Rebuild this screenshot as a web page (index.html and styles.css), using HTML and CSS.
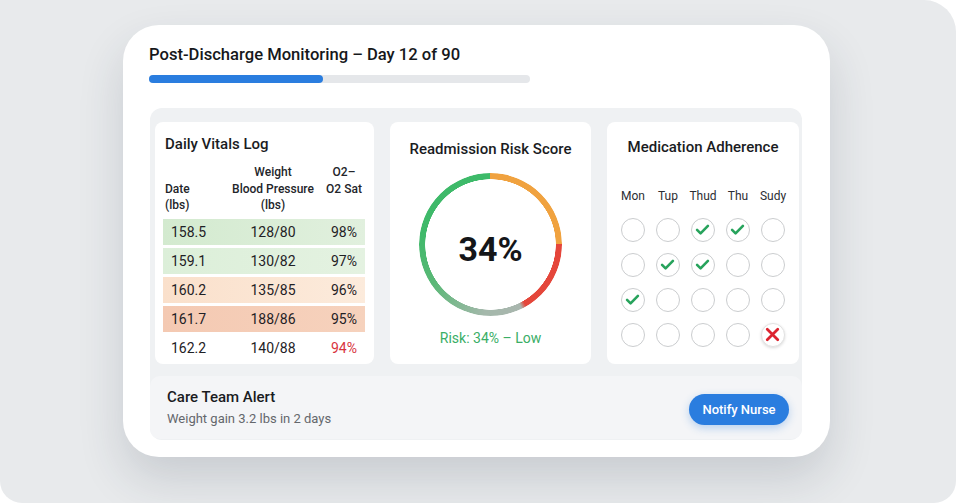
FILE: index.html
```html
<!DOCTYPE html>
<html lang="en">

<head>
    <meta charset="UTF-8">
    <meta name="viewport" content="width=device-width, initial-scale=1.0">
    <title>Post-Discharge Monitoring</title>
    <link rel="stylesheet" href="styles.css">
</head>

<body>
<div class="frame">
    <div class="card">
        <div class="page-title">Post-Discharge Monitoring – Day 12 of 90</div>
        <div class="progress">
            <div class="progress-fill" style="width: 45.7%"></div>
        </div>

        <div class="panel">
            <div class="tiles">
                <div class="tile vitals">
                    <div class="tile-title">Daily Vitals Log</div>
                    <div class="vitals-head">
                        <span class="col-date">Date<br>(lbs)</span>
                        <span class="col-bp">Weight<br>Blood Pressure<br>(lbs)</span>
                        <span class="col-sat">O2–<br>O2 Sat</span>
                    </div>
                    <div class="vitals-row good">
                        <span>158.5</span><span>128/80</span><span>98%</span>
                    </div>
                    <div class="vitals-row ok">
                        <span>159.1</span><span>130/82</span><span>97%</span>
                    </div>
                    <div class="vitals-row warn">
                        <span>160.2</span><span>135/85</span><span>96%</span>
                    </div>
                    <div class="vitals-row alert">
                        <span>161.7</span><span>188/86</span><span>95%</span>
                    </div>
                    <div class="vitals-row">
                        <span>162.2</span><span>140/88</span><span class="low">94%</span>
                    </div>
                </div>

                <div class="tile risk">
                    <div class="tile-title">Readmission Risk Score</div>
                    <div class="gauge">
                        <span class="gauge-value">34%</span>
                    </div>
                    <div class="risk-label">Risk: 34% – Low</div>
                </div>

                <div class="tile meds">
                    <div class="tile-title">Medication Adherence</div>
                    <div class="dose-grid">
                        <span class="day">Mon</span>
                        <span class="day">Tup</span>
                        <span class="day">Thud</span>
                        <span class="day">Thu</span>
                        <span class="day">Sudy</span>

                        <span class="dose"></span>
                        <span class="dose"></span>
                        <span class="dose taken"><svg viewBox="0 0 24 24"><path d="M5.8 12.4l4 4 8.4-8.6"/></svg></span>
                        <span class="dose taken"><svg viewBox="0 0 24 24"><path d="M5.8 12.4l4 4 8.4-8.6"/></svg></span>
                        <span class="dose"></span>

                        <span class="dose"></span>
                        <span class="dose taken"><svg viewBox="0 0 24 24"><path d="M5.8 12.4l4 4 8.4-8.6"/></svg></span>
                        <span class="dose taken"><svg viewBox="0 0 24 24"><path d="M5.8 12.4l4 4 8.4-8.6"/></svg></span>
                        <span class="dose"></span>
                        <span class="dose"></span>

                        <span class="dose taken"><svg viewBox="0 0 24 24"><path d="M5.8 12.4l4 4 8.4-8.6"/></svg></span>
                        <span class="dose"></span>
                        <span class="dose"></span>
                        <span class="dose"></span>
                        <span class="dose"></span>

                        <span class="dose"></span>
                        <span class="dose"></span>
                        <span class="dose"></span>
                        <span class="dose"></span>
                        <span class="dose missed"><svg viewBox="0 0 24 24"><path d="M6 6l12 12M18 6L6 18"/></svg></span>
                    </div>
                </div>
            </div>

            <div class="care-alert">
                <div>
                    <div class="alert-title">Care Team Alert</div>
                    <div class="alert-text">Weight gain 3.2 lbs in 2 days</div>
                </div>
                <button type="button" class="notify-button">Notify Nurse</button>
            </div>
        </div>
    </div>
</div>
</body>

</html>
```

FILE: styles.css
```css
body {
    margin: 0;
    background-color: #ffffff;
    font-family: Roboto, "Liberation Sans", Arial, sans-serif;
    color: #1d1f22;
}

.frame {
    box-sizing: border-box;
    width: 956px;
    height: 503px;
    padding: 25px 0 0 123px;
    background-color: #e8eaec;
    border-radius: 0 32px 22px 22px;
    overflow: hidden;
}

.card {
    box-sizing: border-box;
    width: 707px;
    height: 432px;
    padding: 20px 28px 0 27px;
    background-color: #ffffff;
    border-radius: 36px;
    box-shadow: 0 22px 46px rgba(40, 50, 70, 0.16);
}

.page-title {
    margin-left: -1px;
    font-size: 16.6px;
    line-height: 20px;
    font-weight: 500;
    color: #16181b;
}

.progress {
    width: 381px;
    height: 8px;
    margin-top: 10px;
    margin-left: -1px;
    background-color: #e5e7ea;
    border-radius: 4px;
}

.progress-fill {
    height: 100%;
    background-color: #2a7ddf;
    border-radius: 4px;
}

.panel {
    box-sizing: border-box;
    height: 332px;
    margin-top: 25px;
    padding: 14px 2px 0 5px;
    background-color: #eff1f3;
    border-radius: 12px;
}

.tiles {
    display: grid;
    grid-template-columns: 219px 201px 192px;
    gap: 16px;
    height: 238px;
}

.tile {
    background-color: #ffffff;
    border-radius: 8px;
}

.tile-title {
    font-size: 15px;
    line-height: 18px;
    font-weight: 500;
    color: #1a1c1f;
}

/* vitals */

.vitals {
    padding: 13px 9px 0 8px;
}

.vitals .tile-title {
    padding-left: 2px;
}

.vitals-head,
.vitals-row {
    display: grid;
    grid-template-columns: 60px 100px 42px;
}

.vitals-head {
    margin-top: 11px;
    margin-bottom: 5px;
    font-size: 12px;
    line-height: 16.5px;
    font-weight: 500;
    color: #23252a;
}

.col-date {
    align-self: end;
    padding-left: 2px;
}

.col-bp,
.col-sat {
    text-align: center;
}

.vitals-row {
    height: 26px;
    margin-bottom: 3px;
    align-items: center;
    font-size: 14px;
    color: #1f2125;
}

.vitals-row span:first-child {
    padding-left: 8px;
}

.vitals-row span:nth-child(2),
.vitals-row span:nth-child(3) {
    text-align: center;
}

.vitals-row.good {
    background: linear-gradient(90deg, #d3eacf, #e1f0de);
}

.vitals-row.ok {
    background: linear-gradient(90deg, #dcefd9, #e4f2e1);
}

.vitals-row.warn {
    background: linear-gradient(90deg, #fae0cb, #fcebdc);
}

.vitals-row.alert {
    background: linear-gradient(90deg, #f4c9b2, #f6d2bd);
}

.vitals-row .low {
    color: #d8333d;
}

/* risk gauge */

.risk {
    display: flex;
    flex-direction: column;
    align-items: center;
    padding-top: 18px;
}

.gauge {
    position: relative;
    width: 143px;
    height: 143px;
    margin-top: 15px;
    border-radius: 50%;
    display: flex;
    align-items: center;
    justify-content: center;
}

.gauge::before {
    content: "";
    position: absolute;
    inset: 0;
    border-radius: 50%;
    background: conic-gradient(#f0a23f 0deg 90deg, #e5453a 90deg, #e4473b 150deg, #a9b6ae 154deg, #a4b8ab 185deg, #5bb877 235deg, #3fb96a 280deg, #3dba69 360deg);
    -webkit-mask: radial-gradient(circle, transparent 65px, #000 65.5px);
    mask: radial-gradient(circle, transparent 65px, #000 65.5px);
}

.gauge-value {
    position: relative;
    margin-top: 9px;
    font-size: 34px;
    font-weight: 700;
    color: #141619;
}

.risk-label {
    margin-top: 14px;
    font-size: 14px;
    line-height: 17px;
    color: #3aae66;
}

/* medication grid */

.meds {
    display: flex;
    flex-direction: column;
    align-items: center;
    padding-top: 16px;
}

.dose-grid {
    display: grid;
    grid-template-columns: repeat(5, 35px);
    grid-template-rows: 18px repeat(4, 24px);
    row-gap: 11px;
    justify-items: center;
    margin-top: 33px;
}

.day {
    font-size: 12px;
    line-height: 15px;
    color: #2c2e33;
    white-space: nowrap;
}

.dose {
    box-sizing: border-box;
    width: 24px;
    height: 24px;
    border: 1.5px solid #cbcdcf;
    border-radius: 50%;
    background-color: #ffffff;
}

.dose svg {
    display: block;
    width: 21px;
    height: 21px;
    fill: none;
    stroke-linecap: round;
    stroke-linejoin: round;
}

.dose.taken svg {
    stroke: #27a35c;
    stroke-width: 3;
}

.dose.missed {
    border-color: #e2e2e2;
    box-shadow: 0 1px 3px rgba(0, 0, 0, 0.15);
}

.dose.missed svg {
    stroke: #dc2430;
    stroke-width: 3.2;
}

/* alert */

.care-alert {
    display: flex;
    justify-content: space-between;
    align-items: center;
    height: 63px;
    margin: 16px -2px 0 -5px;
    padding: 0 13px 0 17px;
    background-color: #f4f5f7;
    border-radius: 10px;
}

.alert-title {
    font-size: 15px;
    line-height: 19px;
    font-weight: 500;
    color: #1a1c1f;
}

.alert-text {
    margin-top: 3px;
    font-size: 13px;
    line-height: 17px;
    color: #64676c;
}

.notify-button {
    width: 100px;
    height: 31px;
    margin-top: 3px;
    background-color: #2a7ddf;
    color: #ffffff;
    font-family: Roboto, "Liberation Sans", Arial, sans-serif;
    font-size: 13px;
    font-weight: 500;
    border: none;
    border-radius: 16px;
    box-shadow: 0 3px 8px rgba(42, 125, 223, 0.3);
    cursor: pointer;
}
```
